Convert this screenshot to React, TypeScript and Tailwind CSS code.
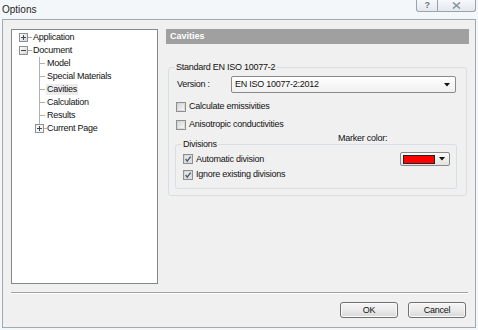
import React from "react";

const font = "font-['Liberation_Sans',Arial,sans-serif]";

function Expander({ plus }: { plus?: boolean }) {
  return (
    <svg width="9" height="9" viewBox="0 0 9 9" className="shrink-0">
      <defs>
        <linearGradient id="exp" x1="0" y1="0" x2="1" y2="1">
          <stop offset="0" stopColor="#ffffff" />
          <stop offset="1" stopColor="#d4d4d4" />
        </linearGradient>
      </defs>
      <rect x="0.5" y="0.5" width="8" height="8" fill="url(#exp)" stroke="#8f8f8f" />
      <line x1="2" y1="4.5" x2="7" y2="4.5" stroke="#3b4a5c" />
      {plus && <line x1="4.5" y1="2" x2="4.5" y2="7" stroke="#3b4a5c" />}
    </svg>
  );
}

function Check({ checked }: { checked?: boolean }) {
  return (
    <svg width="10" height="10" viewBox="0 0 10 10" className="shrink-0">
      <defs>
        <linearGradient id="cb" x1="0" y1="0" x2="1" y2="1">
          <stop offset="0" stopColor="#d6d6d6" />
          <stop offset="1" stopColor="#f7f7f7" />
        </linearGradient>
      </defs>
      <rect x="0.5" y="0.5" width="9" height="9" fill="#fff" stroke="#8e8f8f" />
      <rect x="1.5" y="1.5" width="7" height="7" fill={checked ? "#e4e4e4" : "url(#cb)"} stroke="#c8c8c8" strokeWidth="0.6" />
      {checked && <path d="M2.6 5 L4.3 7.2 L7.6 2.6" fill="none" stroke="#4a5b78" strokeWidth="1.4" />}
    </svg>
  );
}

function CheckRow({ label, checked, className = "" }: { label: string; checked?: boolean; className?: string }) {
  return (
    <div className={`flex items-center h-[13px] ${className}`}>
      <Check checked={checked} />
      <span className="ml-[3px]">{label}</span>
    </div>
  );
}

function TopNode({ label, plus }: { label: string; plus?: boolean }) {
  return (
    <div className="flex items-center h-[13px]">
      <div className="w-[7px]" />
      <Expander plus={plus} />
      <div className="w-[4px] h-px bg-[#a8a8a8]" />
      <span className="ml-px">{label}</span>
    </div>
  );
}

function ChildNode({ label, last, selected }: { label: string; last?: boolean; selected?: boolean }) {
  return (
    <div className="flex items-center h-[13px]">
      <div className="w-[27px]" />
      <svg width="8" height="13" viewBox="0 0 8 13" className="shrink-0">
        <line x1="0.5" y1="0" x2="0.5" y2={last ? 6.5 : 13} stroke="#b0b0b0" />
        <line x1="0.5" y1="6.5" x2="6" y2="6.5" stroke="#b0b0b0" />
      </svg>
      <span className={selected ? "bg-[#ececec] px-px -ml-px" : ""}>{label}</span>
    </div>
  );
}

function Button({ label }: { label: string }) {
  return (
    <div className="w-[58px] h-[16px] rounded-[3px] border border-[#707070] bg-gradient-to-b from-[#f4f4f4] via-[#ebebeb] to-[#d8d8d8] flex items-center justify-center shadow-[inset_0_0_0_1px_#fbfbfb]">
      {label}
    </div>
  );
}

export default function App() {
  return (
    <div className={`w-[478px] h-[330px] bg-[#f4f7fa] flex flex-col px-[2px] pb-[2px] text-[9px] tracking-[-0.25px] text-[#111] leading-[11px] ${font}`}>
      {/* title bar */}
      <div className="h-[19px] flex items-start justify-between shrink-0">
        <span className="text-[10px] tracking-normal mt-[4px] leading-[12px] text-[#1e1e1e]">Options</span>
        <div className="flex h-[12px]">
          <div className="w-[22px] border border-t-0 border-[#9aa3ae] rounded-bl-[3px] bg-gradient-to-b from-[#f7f9fb] to-[#e3e8ee] flex items-center justify-center text-[9px] font-bold text-[#6e7782] leading-none">?</div>
          <div className="w-[38px] border border-t-0 border-l-0 border-[#9aa3ae] rounded-br-[3px] bg-gradient-to-b from-[#f7f9fb] to-[#e3e8ee] flex items-center justify-center">
            <svg width="9" height="7" viewBox="0 0 9 7">
              <path d="M1 0.5 L8 6.5 M8 0.5 L1 6.5" stroke="#8a939e" strokeWidth="1.6" />
            </svg>
          </div>
        </div>
      </div>

      {/* client area */}
      <div className="flex-1 border border-[#a3a9b1] bg-[#f0f0f0] flex flex-col">
        <div className="flex pt-[9px] pl-[8px] pr-[6px]">
          {/* tree */}
          <div className="w-[147px] h-[255px] border border-[#828790] bg-white pt-px shrink-0">
            <TopNode label="Application" plus />
            <TopNode label="Document" />
            <ChildNode label="Model" />
            <ChildNode label="Special Materials" />
            <ChildNode label="Cavities" selected />
            <ChildNode label="Calculation" />
            <ChildNode label="Results" />
            <div className="flex items-center h-[13px]">
              <div className="w-[23px]" />
              <svg width="12" height="13" viewBox="0 0 12 13" className="shrink-0">
                <line x1="4.5" y1="0" x2="4.5" y2="2" stroke="#b0b0b0" />
                <rect x="0.5" y="2.5" width="8" height="8" fill="#f4f4f4" stroke="#8f8f8f" />
                <line x1="2" y1="6.5" x2="7" y2="6.5" stroke="#3b4a5c" />
                <line x1="4.5" y1="4" x2="4.5" y2="9" stroke="#3b4a5c" />
                <line x1="9" y1="6.5" x2="12" y2="6.5" stroke="#b0b0b0" />
              </svg>
              <span>Current Page</span>
            </div>
          </div>

          {/* right panel */}
          <div className="flex-1 ml-[8px] flex flex-col">
            <div className="h-[15px] bg-[#a0a0a0] text-white font-bold pl-[4px] flex items-center tracking-normal">Cavities</div>

            <fieldset className="mt-[18px] mx-[2px] border border-[#d5dfe5] rounded-[3px] px-[6px] pb-[6px]">
              <legend className="px-px leading-[11px]">Standard EN ISO 10077-2</legend>
              <div className="flex items-center h-[17px] mt-[3px] ml-[2px]">
                <span className="w-[54px]">Version :</span>
                <div className="w-[225px] h-[17px] border border-[#8a8a8a] rounded-[2px] bg-gradient-to-b from-white to-[#f0f0f0] flex items-center justify-between pl-[3px] pr-[5px]">
                  <span>EN ISO 10077-2:2012</span>
                  <svg width="6" height="4" viewBox="0 0 6 4">
                    <path d="M0 0 H6 L3 3.5 Z" fill="#111" />
                  </svg>
                </div>
              </div>
              <CheckRow label="Calculate emissivities" className="mt-[7px] ml-px" />
              <CheckRow label="Anisotropic conductivities" className="mt-[5px] ml-px" />
              <div className="h-[11px] mt-[2px] pl-[163px]">Marker color:</div>
              <fieldset className="-mt-[5px] w-[282px] border border-[#d5dfe5] rounded-[3px] pl-[7px] pr-[6px] pb-[7px]">
                <legend className="-ml-px px-px leading-[11px]">Divisions</legend>
                <div className="flex items-center justify-between h-[14px] mt-[2px]">
                  <CheckRow label="Automatic division" checked />
                  <div className="w-[50px] h-[14px] border border-[#8a8a8a] rounded-[2px] bg-gradient-to-b from-[#fafafa] to-[#e2e2e2] flex items-center pl-[2px] pr-[4px] justify-between">
                    <div className="w-[32px] h-[9px] bg-[#ff0000] border border-[#222]" />
                    <svg width="6" height="4" viewBox="0 0 6 4">
                      <path d="M0 0 H6 L3 3.5 Z" fill="#111" />
                    </svg>
                  </div>
                </div>
                <CheckRow label="Ignore existing divisions" checked className="mt-[2px]" />
              </fieldset>
            </fieldset>
          </div>
        </div>

        {/* separator */}
        <div className="mt-[8px] ml-[8px] mr-[7px] h-[2px] border-t border-[#a0a0a0] border-b border-b-white" />

        {/* buttons */}
        <div className="flex justify-end gap-[10px] mt-[8px] pr-[9px]">
          <Button label="OK" />
          <Button label="Cancel" />
        </div>
      </div>
    </div>
  );
}
